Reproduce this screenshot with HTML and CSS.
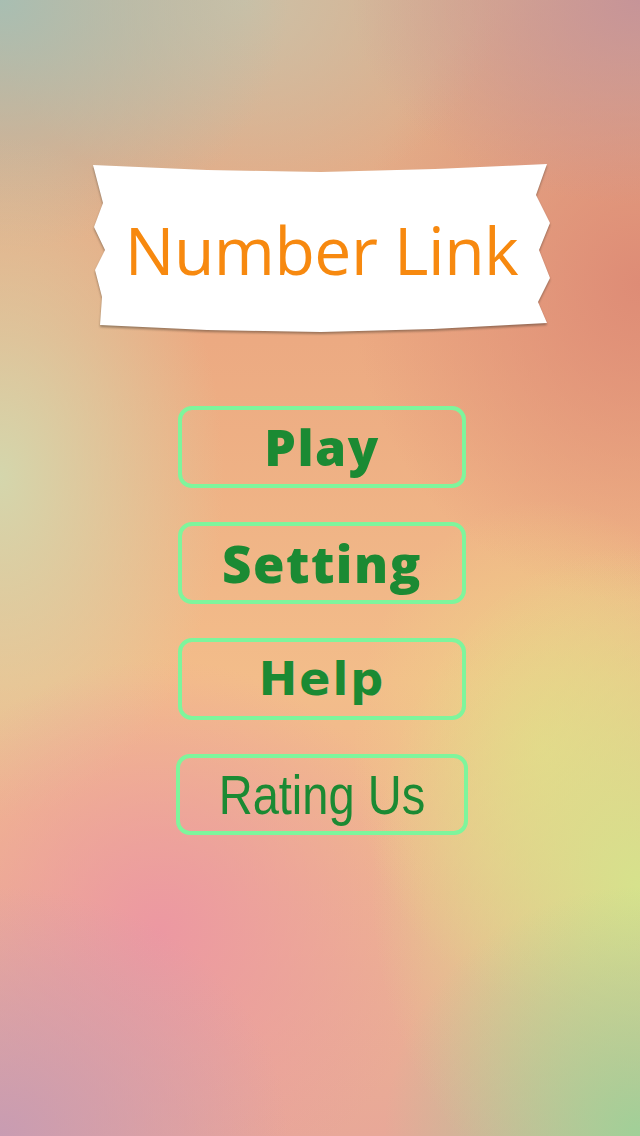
FILE: index.html
```html
<!DOCTYPE html>
<html lang="en">
<head>
    <meta charset="UTF-8">
    <meta name="viewport" content="width=device-width, initial-scale=1.0">
    <title>Number Link</title>
    <link rel="stylesheet" href="styles.css">
</head>
<body>
    <div class="screen">
        <div class="banner-wrap">
            <div class="banner">
                <h1 class="title">Number Link</h1>
            </div>
        </div>

        <div class="menu">
            <button class="menu-btn btn-play">Play</button>
            <button class="menu-btn btn-setting">Setting</button>
            <button class="menu-btn btn-help">Help</button>
            <button class="menu-btn btn-rate"><span>Rating Us</span></button>
        </div>
    </div>
</body>
</html>
```

FILE: styles.css
```css
html, body {
    margin: 0;
    padding: 0;
}

body {
    width: 640px;
    height: 1136px;
    overflow: hidden;
    font-family: 'Open Sans', sans-serif;
    background-color: #efb489;
    background-image:
        radial-gradient(ellipse 40% 22% at 100% 100%, rgba(160, 208, 152, 1), rgba(160, 208, 152, 0)),
        radial-gradient(ellipse 42% 30% at 100% 78%, rgba(214, 226, 140, 1), rgba(214, 226, 140, 0)),
        radial-gradient(ellipse 30% 22% at 85% 66%, rgba(236, 214, 136, 0.9), rgba(236, 214, 136, 0)),
        radial-gradient(ellipse 45% 22% at 0% 100%, rgba(200, 156, 178, 1), rgba(200, 156, 178, 0)),
        radial-gradient(ellipse 42% 24% at 25% 82%, rgba(236, 152, 162, 1), rgba(236, 152, 162, 0)),
        radial-gradient(ellipse 35% 30% at 0% 42%, rgba(212, 214, 172, 1), rgba(212, 214, 172, 0)),
        radial-gradient(ellipse 45% 22% at 0% 0%, rgba(168, 190, 178, 1), rgba(168, 190, 178, 0)),
        radial-gradient(ellipse 45% 18% at 100% 0%, rgba(198, 148, 152, 1), rgba(198, 148, 152, 0)),
        radial-gradient(ellipse 40% 18% at 38% 0%, rgba(204, 192, 166, 1), rgba(204, 192, 166, 0)),
        radial-gradient(ellipse 45% 28% at 100% 25%, rgba(222, 140, 118, 1), rgba(222, 140, 118, 0)),
        linear-gradient(180deg, #dcae8c 0%, #ecaa82 30%, #f3bd8a 60%, #e8a898 100%);
}

.screen {
    padding-top: 163px;
}

/* torn paper title */
.banner-wrap {
    width: 457px;
    height: 170px;
    margin-left: 93px;
    filter: drop-shadow(0 2px 1px rgba(60, 50, 40, 0.45));
}

.banner {
    width: 100%;
    height: 100%;
    background: #ffffff;
    display: flex;
    align-items: center;
    justify-content: center;
    clip-path: polygon(
        0px 2px, 114px 7px, 228px 9px, 342px 6px, 454px 1px,
        443px 32px, 457px 60px, 446px 87px, 457px 115px, 445px 139px, 454px 160px,
        340px 166px, 228px 169px, 114px 167px, 7px 162px,
        9px 134px, 2px 107px, 12px 87px, 1px 64px, 10px 40px
    );
}

.title {
    margin: 0;
    font-family: 'Open Sans', sans-serif;
    font-weight: 500;
    font-size: 66px;
    line-height: 1;
    color: #f7890f;
    letter-spacing: -0.5px;
    padding-top: 2px;
}

.menu {
    display: flex;
    flex-direction: column;
    align-items: center;
    gap: 34px;
    margin-top: 73px;
    padding-left: 4px;
}

.menu-btn {
    width: 288px;
    height: 82px;
    box-sizing: border-box;
    border: 4px solid #7ef59c;
    border-radius: 14px;
    background: transparent;
    color: #1b8a33;
    padding: 0;
    display: flex;
    align-items: center;
    justify-content: center;
    cursor: pointer;
}

.btn-play {
    font-family: 'Open Sans', sans-serif;
    font-weight: 800;
    font-size: 50px;
    letter-spacing: 1.5px;
}

.btn-setting {
    font-family: 'Open Sans', sans-serif;
    font-weight: 800;
    font-size: 51px;
    letter-spacing: 1.5px;
}

.btn-help {
    font-family: 'DejaVu Sans', sans-serif;
    font-weight: 700;
    font-size: 46px;
    letter-spacing: 2px;
}

.btn-rate {
    width: 292px;
    height: 81px;
    font-family: 'Liberation Sans', Arial, sans-serif;
    font-weight: 400;
    font-size: 56px;
}

.btn-rate span {
    display: inline-block;
    transform: scaleX(0.84);
}
```
